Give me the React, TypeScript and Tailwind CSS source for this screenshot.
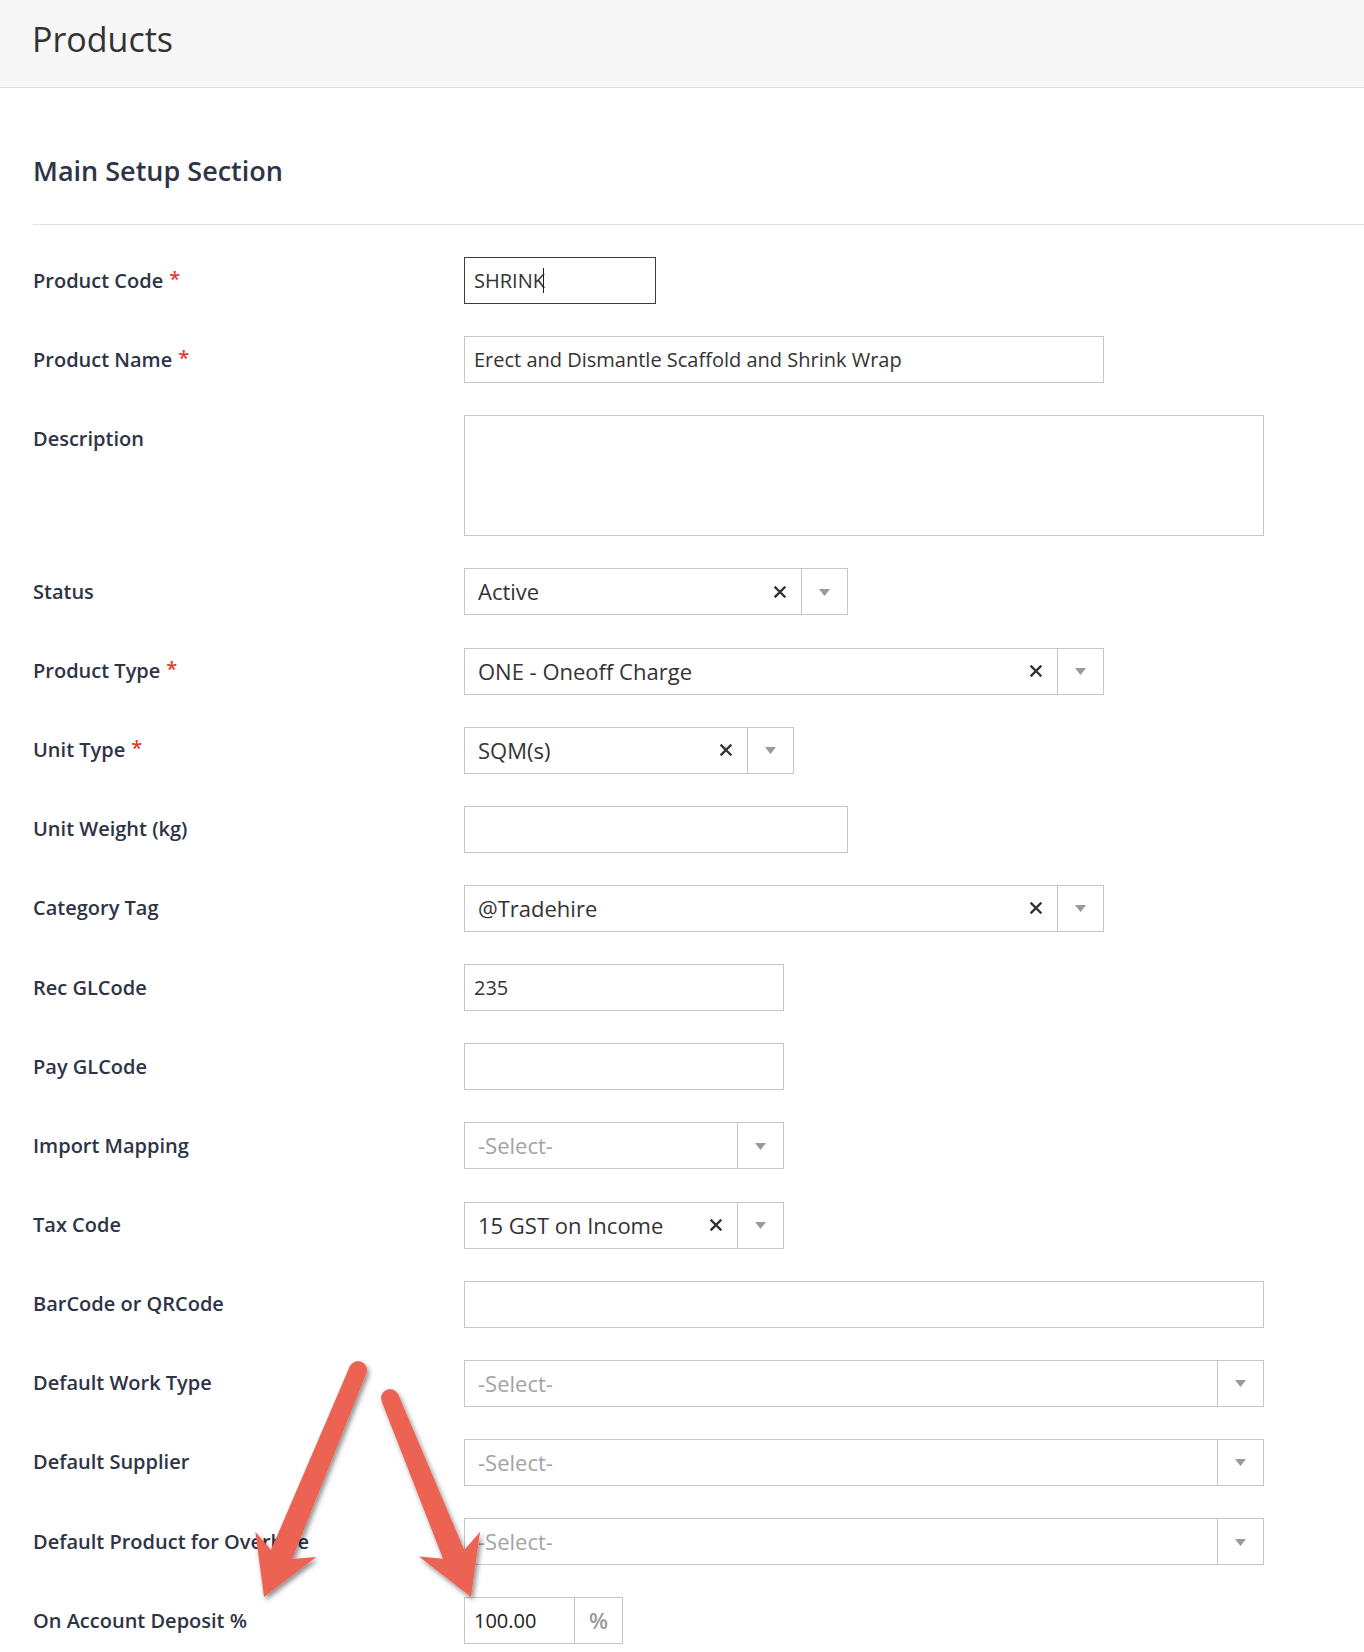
import React from "react";

type Field = {
  label: string;
  required?: boolean;
  kind: "text" | "textarea" | "select" | "addon";
  width: number;
  value?: string;
  placeholder?: string;
  clearable?: boolean;
  focused?: boolean;
};

const FIELDS: Field[] = [
  { label: "Product Code", required: true, kind: "text", width: 192, value: "SHRINK", focused: true },
  { label: "Product Name", required: true, kind: "text", width: 640, value: "Erect and Dismantle Scaffold and Shrink Wrap" },
  { label: "Description", kind: "textarea", width: 800 },
  { label: "Status", kind: "select", width: 384, value: "Active", clearable: true },
  { label: "Product Type", required: true, kind: "select", width: 640, value: "ONE - Oneoff Charge", clearable: true },
  { label: "Unit Type", required: true, kind: "select", width: 330, value: "SQM(s)", clearable: true },
  { label: "Unit Weight (kg)", kind: "text", width: 384 },
  { label: "Category Tag", kind: "select", width: 640, value: "@Tradehire", clearable: true },
  { label: "Rec GLCode", kind: "text", width: 320, value: "235" },
  { label: "Pay GLCode", kind: "text", width: 320 },
  { label: "Import Mapping", kind: "select", width: 320, placeholder: "-Select-" },
  { label: "Tax Code", kind: "select", width: 320, value: "15 GST on Income", clearable: true },
  { label: "BarCode or QRCode", kind: "text", width: 800 },
  { label: "Default Work Type", kind: "select", width: 800, placeholder: "-Select-" },
  { label: "Default Supplier", kind: "select", width: 800, placeholder: "-Select-" },
  { label: "Default Product for Overhire", kind: "select", width: 800, placeholder: "-Select-" },
  { label: "On Account Deposit %", kind: "addon", width: 159, value: "100.00" },
];

const FONT = "font-['Open_Sans',_'Liberation_Sans',_sans-serif]";

function ClearIcon() {
  return (
    <svg width="12" height="12" viewBox="0 0 12 12" className="shrink-0">
      <path d="M1.5 1.5 L10.5 10.5 M10.5 1.5 L1.5 10.5" stroke="#333" strokeWidth="2.4" strokeLinecap="square" />
    </svg>
  );
}

function Caret() {
  return (
    <svg width="11" height="7" viewBox="0 0 11 7">
      <path d="M0 0 H11 L5.5 7 Z" fill="#9a9a9a" />
    </svg>
  );
}

function Control({ f }: { f: Field }) {
  if (f.kind === "textarea") {
    return <div className="h-[121px] border border-[#c6c6c6] bg-white" style={{ width: f.width }} />;
  }
  if (f.kind === "text") {
    return (
      <div
        className={`h-[47px] flex items-center pl-[9px] text-[20px] text-[#333] bg-white border ${
          f.focused ? "border-[#3c3c3c]" : "border-[#c6c6c6]"
        }`}
        style={{ width: f.width }}
      >
        <span>{f.value}</span>
        {f.focused && <span className="inline-block w-px h-[25px] bg-[#222] -ml-[2px]" />}
      </div>
    );
  }
  if (f.kind === "addon") {
    return (
      <div className="h-[47px] flex border border-[#c6c6c6] bg-white" style={{ width: f.width }}>
        <div className="flex-1 flex items-center pl-[9px] text-[20px] text-[#222]">{f.value}</div>
        <div className="w-[48px] border-l border-[#c6c6c6] flex items-center justify-center text-[22px] font-semibold text-[#9a9a9a]">
          %
        </div>
      </div>
    );
  }
  return (
    <div className="h-[47px] flex border border-[#c6c6c6] bg-white" style={{ width: f.width }}>
      <div className="flex-1 flex items-center pl-[13px] pr-[15px] min-w-0">
        <span className={`flex-1 truncate text-[22px] ${f.value ? "text-[#333]" : "text-[#a3a3a3]"}`}>
          {f.value ?? f.placeholder}
        </span>
        {f.clearable && <ClearIcon />}
      </div>
      <div className="w-[46px] border-l border-[#c6c6c6] flex items-center justify-center pt-[1px]">
        <Caret />
      </div>
    </div>
  );
}

// annotation arrows drawn on top of the form
function arrowShape(tail: [number, number], tip: [number, number]) {
  const dx = tip[0] - tail[0];
  const dy = tip[1] - tail[1];
  const len = Math.hypot(dx, dy);
  const d = [dx / len, dy / len];
  const p = [-d[1], d[0]];
  const at = (back: number, side: number) =>
    `${(tip[0] - d[0] * back + p[0] * side).toFixed(1)},${(tip[1] - d[1] * back + p[1] * side).toFixed(1)}`;
  const t = (side: number) => `${(tail[0] + p[0] * side).toFixed(1)},${(tail[1] + p[1] * side).toFixed(1)}`;
  return [t(9), at(46, 11.5), at(57, 33), at(0, 0), at(57, -33), at(46, -11.5), t(-9)].join(" ");
}

const ARROWS: { tail: [number, number]; tip: [number, number] }[] = [
  { tail: [358, 1370], tip: [264, 1597] },
  { tail: [390, 1398], tip: [471, 1597] },
];

export default function App() {
  return (
    <div className={`relative w-full min-h-[1652px] bg-white ${FONT}`}>
      <div className="h-[88px] bg-[#f7f7f7] border-b border-[#dedede] flex items-center pl-[32px] pb-[10px]">
        <h1 className="text-[34px] text-[#333] leading-none">Products</h1>
      </div>

      <div className="pl-[33px]">
        <h2 className="mt-[66px] text-[27px] leading-[34px] font-semibold text-[#2e3446]">Main Setup Section</h2>
        <div className="mt-[36px] h-px bg-[#e2e2e2]" />

        <div className="mt-[32px] flex flex-col gap-[32.15px] pb-[8px]">
          {FIELDS.map((f) => (
            <div key={f.label} className="grid grid-cols-[431px_1fr] items-start">
              <div className="h-[47px] flex items-center text-[20px] font-semibold text-[#2e3446] whitespace-nowrap">
                {f.label}
                {f.required && <span className="ml-[6px] text-[#e8382c] -mt-[4px]">*</span>}
              </div>
              <Control f={f} />
            </div>
          ))}
        </div>
      </div>

      <svg className="absolute left-0 top-0 pointer-events-none" width="1364" height="1652" viewBox="0 0 1364 1652">
        <defs>
          <filter id="arrowShadow" x="-20%" y="-20%" width="140%" height="140%">
            <feDropShadow dx="2" dy="3" stdDeviation="2.5" floodColor="#000" floodOpacity="0.45" />
          </filter>
        </defs>
        {ARROWS.map((a, i) => (
          <g key={i} filter="url(#arrowShadow)" fill="#ec6453">
            <circle cx={a.tail[0]} cy={a.tail[1]} r="9" />
            <polygon points={arrowShape(a.tail, a.tip)} />
          </g>
        ))}
      </svg>
    </div>
  );
}
